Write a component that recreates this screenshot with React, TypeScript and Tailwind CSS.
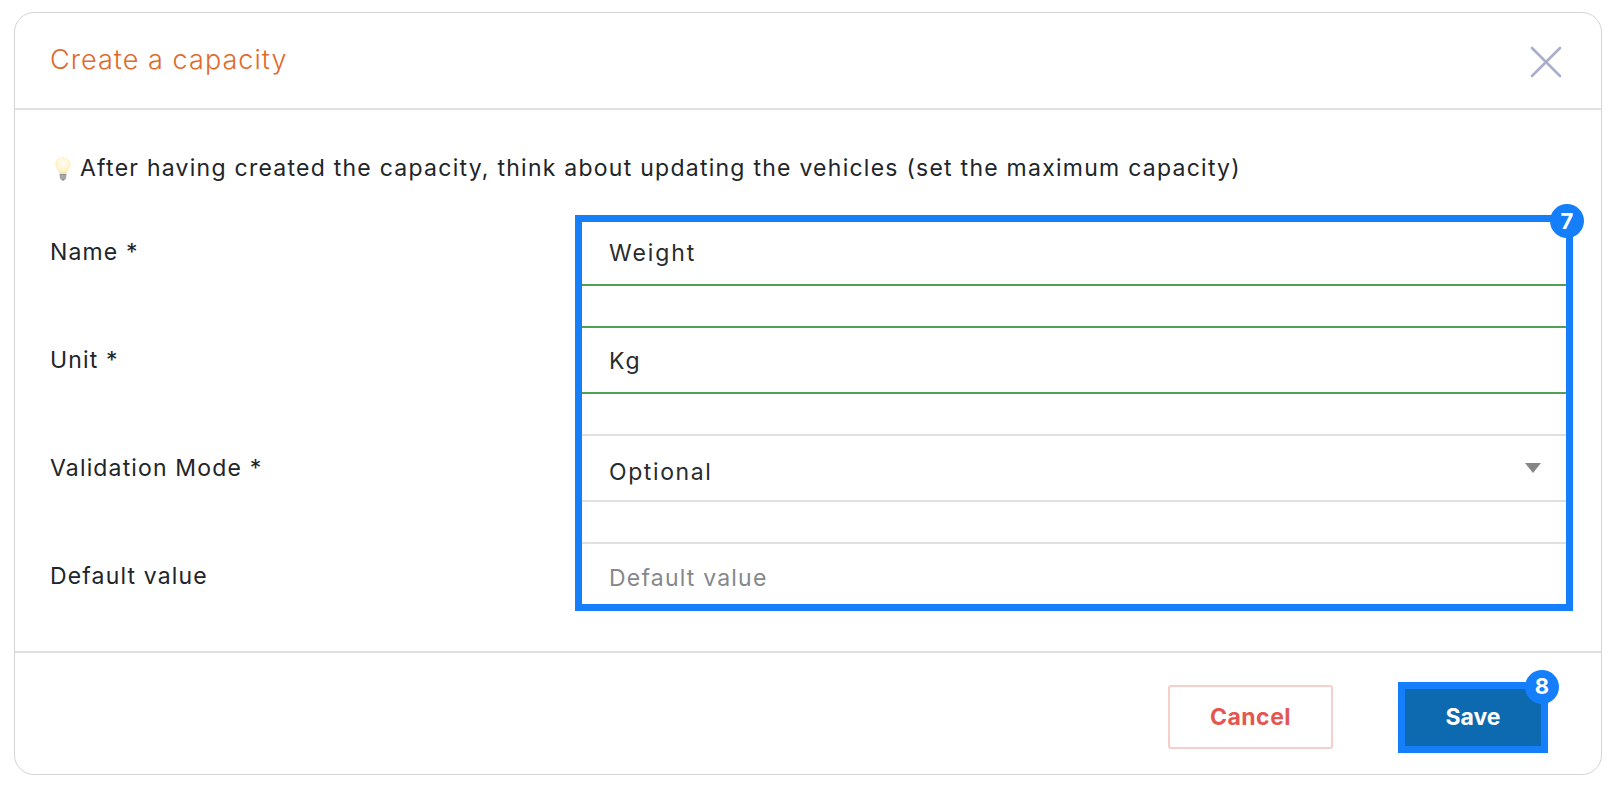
import { useState } from 'react'

const font = { fontFamily: 'Inter, "Open Sans", sans-serif' }

function BulbIcon() {
  return (
    <svg width="18" height="25" viewBox="0 0 18 25" className="shrink-0">
      <defs>
        <radialGradient id="bulbGlow" cx="50%" cy="38%" r="62%">
          <stop offset="0%" stopColor="#fffef6" />
          <stop offset="65%" stopColor="#fef4cf" />
          <stop offset="100%" stopColor="#fbe3a0" />
        </radialGradient>
      </defs>
      <path
        d="M9 1C4.6 1 1.4 4.2 1.4 8.2c0 3.2 2.4 5.2 3.4 7.4.4.9.6 1.6.7 2.4h7c.1-.8.3-1.5.7-2.4 1-2.2 3.4-4.2 3.4-7.4C16.6 4.2 13.4 1 9 1z"
        fill="url(#bulbGlow)"
      />
      <path d="M5.6 18h6.8l-.3 4c-.1 1-.8 1.6-1.6 1.8-.3.6-.8.9-1.5.9s-1.2-.3-1.5-.9c-.8-.2-1.5-.8-1.6-1.8z" fill="#8f9297" />
      <path d="M5.8 20h6.4M6 22h6" stroke="#c3c5c9" strokeWidth="0.8" />
    </svg>
  )
}

export default function App() {
  const [name, setName] = useState('Weight')
  const [unit, setUnit] = useState('Kg')
  const [defaultValue, setDefaultValue] = useState('')

  const inputClass = 'w-full bg-transparent text-[23px] text-[#292b2c] outline-none placeholder:text-[#85888c]'

  return (
    <div className="min-h-[786px] bg-white pl-[14px] pr-[14px] pt-[12px] text-[#212529]" style={font}>
      <div className="flex h-[763px] flex-col rounded-[20px] border border-[#d4d4d4]">
        <div className="flex h-[97px] shrink-0 items-center justify-between border-b-2 border-[#e0e0e0] pl-[35px] pr-[39px]">
          <h2 className="text-[27px] font-light tracking-[1.05px] text-[#df6a2b]">Create a capacity</h2>
          <button type="button" aria-label="Close" className="mt-[2px] text-[#a9aecb]">
            <svg width="32" height="32" viewBox="0 0 32 32" fill="none" stroke="currentColor" strokeWidth="2.6" strokeLinecap="round">
              <path d="M2 2l28 28M30 2L2 30" />
            </svg>
          </button>
        </div>

        <div className="flex-1 pl-[35px] pr-[28px]">
          <div className="mt-[46px] flex h-[25px] items-center gap-[8px] pl-[4px]">
            <BulbIcon />
            <p className="whitespace-nowrap text-[23px] tracking-[1.25px]">
              After having created the capacity, think about updating the vehicles (set the maximum capacity)
            </p>
          </div>

          <div className="mt-[34px] flex">
            <div className="w-[525px] shrink-0 pt-[5px] text-[23px] tracking-[1.15px]">
              <div className="flex h-[64px] items-center">Name *</div>
              <div className="mt-[44px] flex h-[64px] items-center">Unit *</div>
              <div className="mt-[44px] flex h-[64px] items-center">Validation Mode *</div>
              <div className="mt-[44px] flex h-[64px] items-center">Default value</div>
            </div>

            <div className="relative flex-1">
              <div className="h-[396px] border-[7px] border-[#157efb]">
                <div className="flex h-[64px] items-center border-b-2 border-[#4fa154] pl-[27px] pr-[25px]">
                  <input className={`${inputClass} tracking-[1.9px]`} value={name} onChange={(e) => setName(e.target.value)} />
                </div>
                <div className="mt-[40px] flex h-[68px] items-center border-y-2 border-[#4fa154] pl-[27px] pr-[25px] pt-[3px]">
                  <input className={`${inputClass} tracking-[2px]`} value={unit} onChange={(e) => setUnit(e.target.value)} />
                </div>
                <div className="mt-[40px] flex h-[68px] items-center justify-between border-y-2 border-[#e0e0e0] pl-[27px] pr-[25px] pt-[8px]">
                  <span className="text-[23px] tracking-[1.6px] text-[#292b2c]">Optional</span>
                  <svg width="16" height="10" viewBox="0 0 16 10" fill="#868686" className="-mt-[8px]">
                    <path d="M0 0h16L8 10z" />
                  </svg>
                </div>
                <div className="mt-[40px] border-t-2 border-[#e0e0e0] pl-[27px] pr-[25px] pt-[17px]">
                  <input
                    className={`${inputClass} tracking-[1.2px]`}
                    placeholder="Default value"
                    value={defaultValue}
                    onChange={(e) => setDefaultValue(e.target.value)}
                  />
                </div>
              </div>
              <span className="absolute -right-[11px] -top-[11px] flex h-[34px] w-[34px] items-center justify-center rounded-full bg-[#157efb] text-[22px] font-bold text-white">
                7
              </span>
            </div>
          </div>
        </div>

        <div className="flex h-[123px] shrink-0 items-center justify-end border-t-2 border-[#e0e0e0] pr-[53px] pt-[7px]">
          <button
            type="button"
            className="h-[64px] w-[165px] rounded-[3px] border-2 border-[#f6cfca] text-[23px] font-bold tracking-[0.5px] text-[#e4574f]"
          >
            Cancel
          </button>
          <div className="relative ml-[65px]">
            <button
              type="button"
              className="h-[71px] w-[150px] border-[7px] border-[#157efb] bg-[#0d6ab0] text-[23px] font-bold text-white"
            >
              Save
            </button>
            <span className="absolute -right-[11px] -top-[12px] flex h-[34px] w-[34px] items-center justify-center rounded-full bg-[#157efb] text-[22px] font-bold text-white">
              8
            </span>
          </div>
        </div>
      </div>
    </div>
  )
}
